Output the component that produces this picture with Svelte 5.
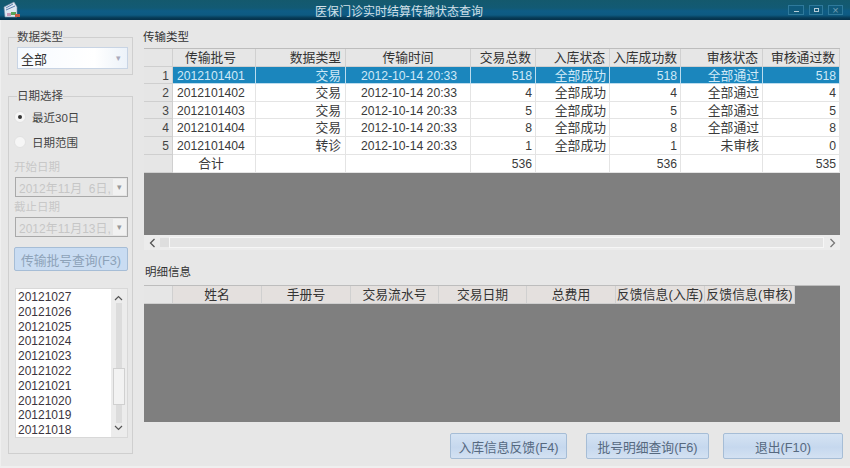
<script>
  const batches = [
    { no: '2012101401', type: '交易', time: '2012-10-14 20:33', total: 518, store: '全部成功', ok: 518, audit: '全部通过', pass: 518 },
    { no: '2012101402', type: '交易', time: '2012-10-14 20:33', total: 4, store: '全部成功', ok: 4, audit: '全部通过', pass: 4 },
    { no: '2012101403', type: '交易', time: '2012-10-14 20:33', total: 5, store: '全部成功', ok: 5, audit: '全部通过', pass: 5 },
    { no: '2012101404', type: '交易', time: '2012-10-14 20:33', total: 8, store: '全部成功', ok: 8, audit: '全部通过', pass: 8 },
    { no: '2012101404', type: '转诊', time: '2012-10-14 20:33', total: 1, store: '全部成功', ok: 1, audit: '未审核', pass: 0 }
  ];
  const headers = ['传输批号', '数据类型', '传输时间', '交易总数', '入库状态', '入库成功数', '审核状态', '审核通过数'];
  const detailHeaders = ['姓名', '手册号', '交易流水号', '交易日期', '总费用', '反馈信息(入库)', '反馈信息(审核)'];
  const dates = ['20121027', '20121026', '20121025', '20121024', '20121023', '20121022', '20121021', '20121020', '20121019', '20121018'];
</script>

<div class="window">
  <div class="titlebar">
    <svg class="appicon" width="18" height="18" viewBox="0 0 18 18">
      <path d="M1 6 L11 1 L14 6 L14 16 L2 16 Z" fill="#dfe8f2" stroke="#7d8fa8" stroke-width="0.6" />
      <path d="M3 7 L10 3 M3 9 L12 5" stroke="#5c7fae" stroke-width="1" />
      <rect x="8" y="11" width="5" height="3" fill="#58a257" />
      <rect x="12" y="13" width="5" height="3" fill="#c8583f" />
      <rect x="4" y="12" width="4" height="3" fill="#c99bb8" />
    </svg>
    <span class="title">医保门诊实时结算传输状态查询</span>
    <div class="winbtns">
      <span class="winbtn wmin"><i class="min"></i></span>
      <span class="winbtn wmax"><i class="max"></i></span>
      <span class="winbtn wclose">×</span>
    </div>
  </div>

  <div class="body">
    <aside class="side">
      <fieldset class="group type-group">
        <legend>数据类型</legend>
        <div class="combo type-combo">
          <span>全部</span>
          <span class="arrow">▾</span>
        </div>
      </fieldset>

      <fieldset class="group date-group">
        <legend>日期选择</legend>
        <div class="radio-row"><span class="radio on"></span>最近30日</div>
        <div class="radio-row second"><span class="radio"></span>日期范围</div>
        <div class="dis-label first">开始日期</div>
        <div class="combo disabled"><span>2012年11月 &nbsp;6日,</span><span class="arrow box">▾</span></div>
        <div class="dis-label">截止日期</div>
        <div class="combo disabled"><span>2012年11月13日,</span><span class="arrow box">▾</span></div>
        <button class="btn query">传输批号查询(F3)</button>
        <div class="listbox">
          <div class="items">
            {#each dates as d}
              <div>{d}</div>
            {/each}
          </div>
          <div class="vscroll">
            <svg class="up" width="9" height="6" viewBox="0 0 9 6"><path d="M1 5 L4.5 1.5 L8 5" fill="none" stroke="#555" stroke-width="1.2" /></svg>
            <span class="thumb"></span>
            <svg class="down" width="9" height="6" viewBox="0 0 9 6"><path d="M1 1 L4.5 4.5 L8 1" fill="none" stroke="#555" stroke-width="1.2" /></svg>
          </div>
        </div>
      </fieldset>
    </aside>

    <main class="content">
      <div class="caption">传输类型</div>
      <div class="tablewrap top">
        <div class="grid main-grid head">
          <div class="rowhead"></div>
          {#each headers as h, i}
            <div class="th" class:first={i === 0} class:right={i === 1 || i === 3 || i === 4 || i === 6 || i === 7}>{h}</div>
          {/each}
        </div>
        {#each batches as b, i}
          <div class="grid main-grid row" class:selected={i === 0}>
            <div class="rowhead">{i + 1}</div>
            <div class="td no">{b.no}</div>
            <div class="td right cjk type">{b.type}</div>
            <div class="td center time">{b.time}</div>
            <div class="td right">{b.total}</div>
            <div class="td right cjk">{b.store}</div>
            <div class="td right">{b.ok}</div>
            <div class="td right cjk">{b.audit}</div>
            <div class="td right">{b.pass}</div>
          </div>
        {/each}
        <div class="grid main-grid row total">
          <div class="rowhead"></div>
          <div class="td center cjk sum">合计</div>
          <div class="td"></div>
          <div class="td"></div>
          <div class="td right">536</div>
          <div class="td"></div>
          <div class="td right">536</div>
          <div class="td"></div>
          <div class="td right">535</div>
        </div>
        <div class="empty"></div>
        <div class="hscroll">
          <svg class="left" width="7" height="10" viewBox="0 0 7 10"><path d="M5.5 1 L1.5 5 L5.5 9" fill="none" stroke="#555" stroke-width="1.3" /></svg>
          <span class="grip"></span>
          <span class="track"></span>
          <svg class="right" width="7" height="10" viewBox="0 0 7 10"><path d="M1.5 1 L5.5 5 L1.5 9" fill="none" stroke="#777" stroke-width="1.3" /></svg>
        </div>
      </div>

      <div class="caption detail">明细信息</div>
      <div class="tablewrap bottom">
        <div class="grid detail-grid head">
          <div class="rowhead"></div>
          {#each detailHeaders as h}
            <div class="th">{h}</div>
          {/each}
        </div>
      </div>

      <div class="actions">
        <button class="btn a1">入库信息反馈(F4)</button>
        <button class="btn a2">批号明细查询(F6)</button>
        <button class="btn a3">退出(F10)</button>
      </div>
    </main>
  </div>
</div>

<style>
  :global(body) {
    margin: 0;
    background: #efefef;
  }

  .window {
    width: 850px;
    height: 468px;
    display: flex;
    flex-direction: column;
    overflow: hidden;
    font-family: "Liberation Sans", "Noto Sans CJK SC", sans-serif;
    font-size: 12px;
    color: #333;
  }

  .titlebar {
    height: 20px;
    flex: none;
    display: flex;
    align-items: center;
    position: relative;
    background: linear-gradient(#14596d 0%, #125a74 40%, #0e5c86 55%, #0e5a82 75%, #073a55 90%, #05304a 100%);
    color: #d3e0e7;
  }

  .appicon {
    margin-left: 3px;
  }

  .title {
    position: absolute;
    left: 0;
    right: 0;
    text-align: center;
    font-size: 12px;
    padding-right: 52px;
  }

  .winbtns {
    margin-left: auto;
    margin-right: 7px;
    margin-top: -1px;
    display: flex;
    gap: 5px;
    position: relative;
  }

  .winbtn {
    box-sizing: border-box;
    height: 10px;
    border: 1px solid #2f7a9c;
    background: #0f5a7c;
    display: flex;
    align-items: center;
    justify-content: center;
    font-size: 11px;
    line-height: 8px;
    color: #6f9db3;
  }

  .wmin {
    width: 16px;
  }

  .wmax {
    width: 14px;
  }

  .wclose {
    width: 15px;
  }

  .winbtn .min {
    width: 5px;
    height: 1px;
    margin-top: 4px;
    background: #b4ccd8;
  }

  .winbtn .max {
    width: 3px;
    height: 2px;
    border: 1px solid #b4ccd8;
  }

  .body {
    flex: 1;
    display: flex;
    min-height: 0;
    background: #e7e7e7;
    margin: 0 0 2px 1px;
  }

  .side {
    width: 125px;
    margin-left: 7px;
    flex: none;
  }

  .group {
    margin: 0;
    padding: 0;
    border: 1px solid #cfcfcf;
    box-sizing: border-box;
    min-width: 0;
  }

  .group legend {
    padding: 0;
    font-size: 11.5px;
    line-height: 14px;
    color: #444;
  }

  .type-group {
    margin-top: 10px;
    height: 45px;
    padding: 3px 5px 0 8px;
  }

  .date-group {
    margin-top: 14px;
    height: 365px;
    padding: 6px 5px 0 6px;
  }

  .date-group legend {
    margin-left: 2px;
  }

  .combo {
    display: flex;
    align-items: center;
    justify-content: space-between;
    box-sizing: border-box;
    height: 22px;
    border: 1px solid #c8d4e4;
    background: linear-gradient(90deg, #f6faff, #fff 70%, #ecf2f9);
    padding: 0 3px 0 3px;
    font-size: 13px;
  }

  .type-combo {
    width: 111px;
  }

  .arrow {
    font-size: 9px;
    color: #aab;
    margin-right: 3px;
  }

  .combo.disabled {
    width: 113px;
    height: 20px;
    border-color: #a9a9a9;
    background: #e6e6e6;
    color: #c6c6c6;
    font-size: 12px;
    padding: 0 1px 0 3px;
    white-space: nowrap;
    overflow: hidden;
  }

  .arrow.box {
    flex: none;
    margin: 0;
    width: 13px;
    height: 16px;
    line-height: 16px;
    text-align: center;
    background: #f1f1f1;
    color: #999;
  }

  .radio-row {
    display: flex;
    align-items: center;
    gap: 5px;
    height: 16px;
    margin-left: -1px;
    font-size: 11.5px;
    color: #444;
  }

  .radio-row.second {
    margin-top: 9px;
  }

  .radio {
    box-sizing: border-box;
    width: 12px;
    height: 12px;
    margin-right: 1px;
    border-radius: 50%;
    background: #f6f6f6;
    border: 1px solid #e2e2e2;
    display: flex;
    align-items: center;
    justify-content: center;
  }

  .radio.on::after {
    content: "";
    width: 4px;
    height: 4px;
    border-radius: 50%;
    background: #333;
  }

  .dis-label {
    color: #c8c8c8;
    height: 14px;
    line-height: 14px;
    margin: 3px 0 3px -1px;
    font-size: 11.5px;
  }

  .dis-label.first {
    margin-top: 10px;
  }

  .btn {
    display: block;
    box-sizing: border-box;
    font-family: inherit;
    font-size: 12.8px;
    color: #6c7f97;
    border: 1px solid #a6bdd6;
    border-radius: 2px;
    background: linear-gradient(#d5e3f3, #c6d8ee 55%, #d3e1f2);
    padding: 0;
    white-space: nowrap;
  }

  .btn.query {
    width: 114px;
    height: 24px;
    margin: 10px 0 0 -1px;
    color: #8da2b8;
    background: #c9dcf2;
  }

  .listbox {
    margin-top: 17px;
    width: 113px;
    height: 150px;
    display: flex;
    background: #fff;
    border: 1px solid #d8d8d8;
    box-sizing: border-box;
  }

  .items {
    flex: 1;
    padding: 1px 0 0 2px;
    font-size: 12px;
    line-height: 14.8px;
    color: #3c3540;
  }

  .vscroll {
    width: 16px;
    flex: none;
    background: #ececec;
    position: relative;
  }

  .vscroll::before {
    content: "";
    position: absolute;
    top: 14px;
    bottom: 14px;
    left: 5px;
    width: 6px;
    background: #dcdcdc;
  }

  .vscroll svg {
    position: absolute;
    left: 3px;
  }

  .vscroll .up {
    top: 6px;
  }

  .vscroll .down {
    bottom: 6px;
  }

  .thumb {
    position: absolute;
    top: 79px;
    left: 2px;
    width: 12px;
    height: 37px;
    background: #f2f2f2;
    border: 1px solid #d0d0d0;
    box-sizing: border-box;
  }

  .content {
    flex: 1;
    min-width: 0;
    margin-left: 10px;
  }

  .caption {
    height: 14px;
    line-height: 14px;
    margin-top: 10px;
    font-size: 11.5px;
    color: #333;
  }

  .tablewrap {
    margin-left: 1px;
    width: 696px;
    background: #7f7f7f;
    border-top: 1px solid #bdbdbd;
    box-sizing: border-box;
    display: flex;
    flex-direction: column;
  }

  .tablewrap.top {
    height: 202px;
    margin-top: 4px;
  }

  .tablewrap.bottom {
    height: 136.5px;
    margin-top: 6px;
  }

  .caption.detail {
    margin-top: 15px;
    margin-left: 2px;
  }

  .grid {
    display: grid;
    grid-template-rows: minmax(0, 1fr);
  }

  .main-grid {
    grid-template-columns: 29px 83px 90px 125px 65px 74px 71px 82px 77px;
  }

  .detail-grid {
    grid-template-columns: 29px 89px 89px 88px 88px 89px 89px 90px;
    width: 651px;
  }

  .head {
    height: 17.6px;
    background: #e6e6e6;
    flex: none;
  }

  .detail-grid.head {
    height: 18px;
    background: #e4e0de;
  }

  .th {
    box-sizing: border-box;
    text-align: center;
    line-height: 17px;
    font-size: 12.8px;
    border-right: 1px solid #d0d0d0;
    border-bottom: 1px solid #cfcfcf;
    white-space: nowrap;
    color: #333;
  }

  .th.first {
    padding-right: 7px;
  }

  .detail-grid .th:nth-child(n + 7) {
    letter-spacing: 0.15px;
  }

  .th.right {
    text-align: right;
    padding-right: 4px;
  }

  .rowhead {
    box-sizing: border-box;
    background: #e6e6e6;
    border-right: 1px solid #d0d0d0;
    border-bottom: 1px solid #cfcfcf;
    text-align: right;
    padding-right: 3px;
    line-height: 18px;
    color: #444;
  }

  .row {
    height: 17.6px;
    background: #fff;
    flex: none;
  }

  .td {
    box-sizing: border-box;
    line-height: 18px;
    padding: 0 3px;
    border-right: 1px solid #e4e4e4;
    border-bottom: 1px solid #e4e4e4;
    white-space: nowrap;
    color: #3a3a3a;
    font-size: 12.2px;
  }

  .td.right {
    text-align: right;
  }

  .td.center {
    text-align: center;
  }

  .td.cjk {
    font-size: 12.8px;
  }

  .td.type {
    padding-right: 4px;
  }

  .td.no {
    padding-left: 4px;
  }

  .td.time {
    padding-left: 5px;
  }

  .td.sum {
    padding-right: 9px;
  }

  .row.selected .td {
    background: #1b86bd;
    color: #cfe9f7;
    border-color: #bcdcee;
  }

  .row.total {
    height: 18px;
  }

  .empty {
    flex: 1;
    background: #7f7f7f;
  }

  .hscroll {
    height: 15px;
    flex: none;
    background: #ececec;
    display: flex;
    align-items: center;
    box-sizing: border-box;
    padding: 0 4px 0 5px;
  }

  .grip {
    width: 9px;
    height: 9px;
    margin-left: 4px;
    background: #dedede;
  }

  .hscroll .track {
    flex: 1;
    height: 9px;
    background: #e4e4e4;
    border: 1px solid #f6f6f6;
    margin: 0 5px 0 0;
  }

  .actions {
    display: flex;
    margin-top: 11.5px;
    margin-left: 307px;
  }

  .btn.a1,
  .btn.a2,
  .btn.a3 {
    flex: none;
    height: 26px;
    color: #56697f;
  }

  .btn.a1 {
    width: 117px;
  }

  .btn.a2 {
    width: 123px;
    margin-left: 19px;
  }

  .btn.a3 {
    width: 120px;
    margin-left: 14px;
  }
</style>
